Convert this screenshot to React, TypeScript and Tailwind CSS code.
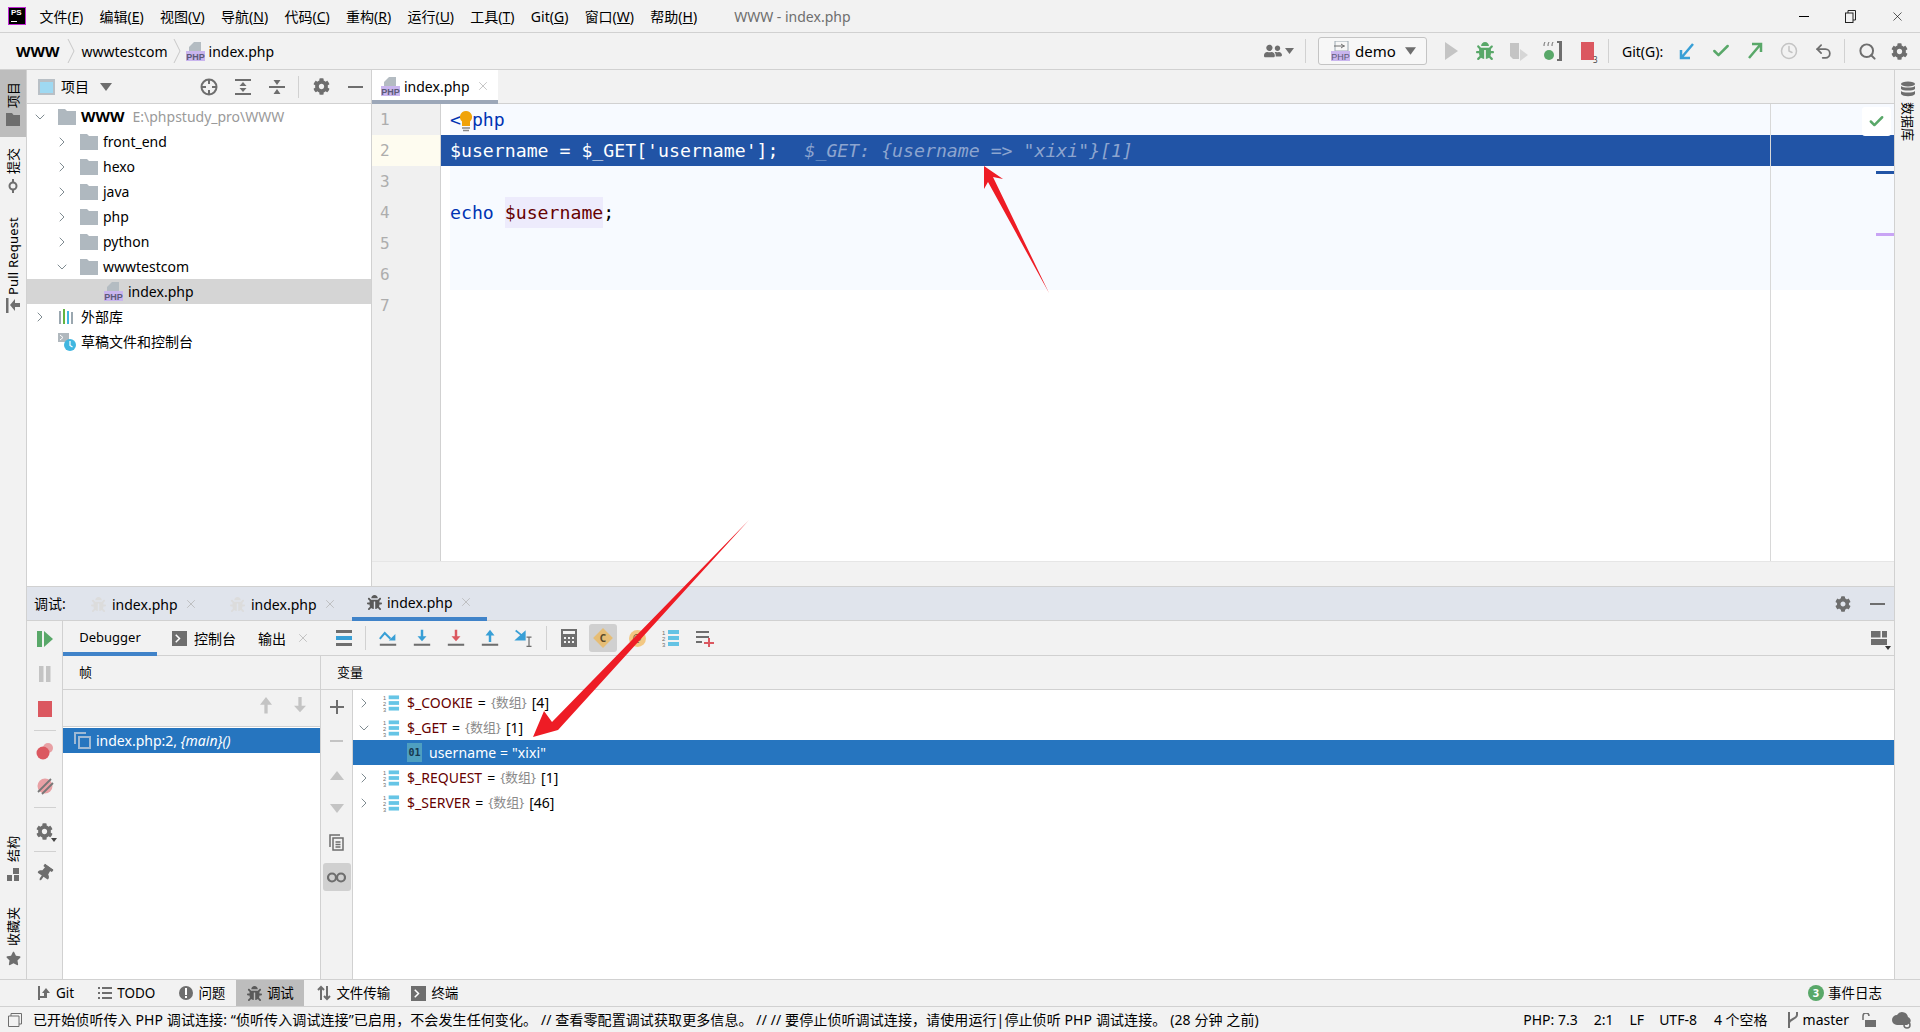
import type { ReactNode } from "react";
import { Check, ChevronDown, ChevronRight, Clock, Search, Undo2, X } from "lucide-react";
import { FaBug, FaCog, FaStar, FaThumbtack, FaUserFriends } from "react-icons/fa";

const menus = [
  ["文件(", "F"],
  ["编辑(", "E"],
  ["视图(", "V"],
  ["导航(", "N"],
  ["代码(", "C"],
  ["重构(", "R"],
  ["运行(", "U"],
  ["工具(", "T"],
  ["Git(", "G"],
  ["窗口(", "W"],
  ["帮助(", "H"],
];

const Slot = ({ children, className = "w-[34px]" }: { children?: ReactNode; className?: string }) => (
  <div className={`flex h-full shrink-0 items-center justify-center ${className}`}>{children}</div>
);

const Sep = ({ className = "mx-[5px] h-[24px]" }: { className?: string }) => (
  <div className={`w-px shrink-0 bg-[#d1d1d1] ${className}`} />
);

const Tri = ({ className = "" }: { className?: string }) => (
  <svg width="12" height="8" viewBox="0 0 12 8" className={className}>
    <path d="M0 0h12L6 8z" fill="#6e6e6e" />
  </svg>
);

const Folder = () => (
  <svg width="18" height="16" viewBox="0 0 18 16" className="shrink-0">
    <path d="M0 0h7l2 2h9v14H0z" fill="#afb8bf" />
  </svg>
);

const PhpIcon = () => (
  <svg width="19" height="19" viewBox="0 0 19 19" className="shrink-0">
    <path d="M8 0h7v9H3V5z" fill="#b4bcc2" />
    <rect x="0" y="9" width="19" height="10" fill="#c9b5ee" />
    <text x="9.5" y="17.5" textAnchor="middle" fontSize="9" fontWeight="700" fill="#5b5a78" fontFamily="Liberation Sans, sans-serif">
      PHP
    </text>
  </svg>
);

const Arrow = ({ dir, color = "#389fd6", base = true }: { dir: "down" | "up"; color?: string; base?: boolean }) => (
  <svg width={base ? 18 : 24} height={base ? 18 : 24} viewBox="0 0 22 22">
    {dir === "down" ? <path d="M9.5 1h3v8h4l-5.500 6-5.500-6h4z" fill={color} /> : <path d="M11 1l5.500 7h-4v8h-3V8h-4z" fill={color} />}
    {base && <rect x="1" y="18" width="20" height="2.500" fill="#6e6e6e" />}
  </svg>
);

const StepOver = () => (
  <svg width="18" height="18" viewBox="0 0 22 22">
    <path d="M1 12l6-7 7 7" fill="none" stroke="#389fd6" strokeWidth="2.500" />
    <path d="M20 6v8h-8z" fill="#389fd6" />
    <rect x="1" y="18" width="20" height="2.500" fill="#6e6e6e" />
  </svg>
);

const RunToCursor = () => (
  <svg width="20" height="20" viewBox="0 0 24 24">
    <path d="M2 3l10 8M13 14V5L3 14z" fill="#389fd6" stroke="#389fd6" strokeWidth="2" />
    <path d="M15 11h6M18 11v11M15 22h6" stroke="#6e6e6e" strokeWidth="1.500" fill="none" />
  </svg>
);

const NumList = ({ small = false }: { small?: boolean }) => (
  <svg width={small ? 17 : 18} height="18" viewBox="0 0 18 18" className="shrink-0">
    <text x="0" y="6" fontSize="6" fill="#6e6e6e" fontFamily="Liberation Sans, sans-serif">1</text>
    <text x="0" y="12" fontSize="6" fill="#6e6e6e" fontFamily="Liberation Sans, sans-serif">2</text>
    <text x="0" y="18" fontSize="6" fill="#6e6e6e" fontFamily="Liberation Sans, sans-serif">3</text>
    <rect x="6" y="1" width="11" height="4" fill="#40b6e0" opacity="0.8" />
    <rect x="6" y="7" width="11" height="4" fill="#40b6e0" opacity="0.8" />
    <rect x="6" y="13" width="11" height="4" fill="#40b6e0" opacity="0.8" />
  </svg>
);

const BugMuted = ({ dark = false }: { dark?: boolean }) => (
  <FaBug size={15} className={dark ? "text-[#5a5a5a]" : "text-[#dcdcdc]"} />
);

const Terminal = () => (
  <svg width="15" height="15" viewBox="0 0 16 16" className="shrink-0">
    <rect width="16" height="16" fill="#6e6e6e" />
    <path d="M4 4l4 4-4 4" fill="none" stroke="#fff" strokeWidth="1.600" />
  </svg>
);

const Close = ({ className = "" }: { className?: string }) => (
  <X size={14} strokeWidth={1.300} className={`text-[#b4b4b4] ${className}`} />
);

const TreeRow = ({
  className,
  open,
  icon,
  children,
}: {
  className: string;
  open?: boolean;
  icon: ReactNode;
  children: ReactNode;
}) => (
  <div className={`flex h-[25px] items-center ${className}`}>
    {open === undefined ? null : (
      <span className="mr-[10px] w-[16px] shrink-0 text-[#7f8b91]">
        {open ? <ChevronDown size={16} strokeWidth={1.500} /> : <ChevronRight size={16} strokeWidth={1.500} />}
      </span>
    )}
    {icon}
    <span className="ml-[5px] flex items-baseline whitespace-nowrap">{children}</span>
  </div>
);

const folders = ["front_end", "hexo", "java", "php", "python"];

function ProjectPanel() {
  return (
    <div className="flex w-[345px] shrink-0 flex-col border-r border-[#d1d1d1]">
      <div className="flex h-[34px] shrink-0 items-center border-b border-[#d1d1d1] pl-[11px]">
        <svg width="17" height="16" viewBox="0 0 17 16" className="shrink-0">
          <rect width="17" height="16" fill="#b9c0c6" />
          <rect x="2" y="3" width="13" height="11" fill="#9fd9f2" />
        </svg>
        <span className="ml-[6px] w-[28px] whitespace-nowrap">项目</span>
        <Tri className="ml-[11px]" />
        <div className="ml-[80px] flex h-full items-center">
          <Slot>
            <svg width="18" height="18" viewBox="0 0 18 18" fill="none" stroke="#6e6e6e" strokeWidth="2">
              <circle cx="9" cy="9" r="7.500" />
              <path d="M9 1v5M9 12v5M1 9h5M12 9h5" />
            </svg>
          </Slot>
          <Slot>
            <svg width="16" height="16" viewBox="0 0 16 16" fill="#6e6e6e">
              <path d="M0 0h16v2H0zM0 14h16v2H0zM8 3l3.500 4h-7zM8 13l-3.500-4h7z" />
            </svg>
          </Slot>
          <Slot>
            <svg width="16" height="16" viewBox="0 0 16 16" fill="#6e6e6e">
              <path d="M0 7h16v2H0zM8 6L4.500 1h7zM8 10l3.500 5h-7z" />
            </svg>
          </Slot>
          <Sep className="mx-[4px] h-[22px]" />
          <Slot className="w-[37px]">
            <FaCog size={17} className="text-[#6e6e6e]" />
          </Slot>
          <Slot className="w-[31px]">
            <div className="h-[2px] w-[15px] bg-[#6e6e6e]" />
          </Slot>
        </div>
      </div>
      <div className="flex-1 bg-white">
        <TreeRow className="pl-[5px]" open icon={<Folder />}>
          <b className="text-[15px] font-bold">WWW</b>
          <span className="ml-[8px] text-[#9a9a9a]">E:\phpstudy_pro\WWW</span>
        </TreeRow>
        {folders.map((name) => (
          <TreeRow key={name} className="pl-[27px]" open={false} icon={<Folder />}>
            {name}
          </TreeRow>
        ))}
        <TreeRow className="pl-[27px]" open icon={<Folder />}>
          wwwtestcom
        </TreeRow>
        <TreeRow className="bg-[#d5d5d5] pl-[77px]" icon={<PhpIcon />}>
          index.php
        </TreeRow>
        <TreeRow
          className="pl-[5px]"
          open={false}
          icon={
            <svg width="18" height="18" viewBox="0 0 18 18" className="shrink-0">
              <path d="M1 3h2v13H1zM13 4h2v12h-2z" fill="#9aa7b0" />
              <path d="M5 1h2v15H5z" fill="#62b543" />
              <path d="M9 3h2v13H9z" fill="#40b6e0" />
            </svg>
          }
        >
          外部库
        </TreeRow>
        <TreeRow
          className="pl-[31px]"
          icon={
            <svg width="18" height="18" viewBox="0 0 18 18" className="shrink-0">
              <path d="M0 0h11v9H0z" fill="#b0b8be" />
              <path d="M2 2l3 2.500L2 7" stroke="#fff" fill="none" />
              <circle cx="12" cy="12" r="6" fill="#40b6e0" />
              <path d="M12 8v4.500l2.500 1.500" stroke="#fff" strokeWidth="1.200" fill="none" />
            </svg>
          }
        >
          草稿文件和控制台
        </TreeRow>
      </div>
    </div>
  );
}

const Num = ({ n, current }: { n: number; current?: boolean }) => (
  <div
    className={`flex h-[31px] w-[69px] shrink-0 items-center border-r border-[#d1d1d1] pl-[8px] font-['DejaVu_Sans_Mono',monospace] text-[16px] text-[#adadad] ${
      current ? "bg-[#fefcf0]" : "bg-[#f0f0f0]"
    }`}
  >
    {n}
  </div>
);

const CodeLine = ({ n, children }: { n: number; children?: ReactNode }) => (
  <div className="flex h-[31px]">
    <Num n={n} />
    <div className="w-[9px] shrink-0 bg-white" />
    <div className="flex flex-1 items-center bg-[#f7faff] whitespace-pre">{children}</div>
  </div>
);

function Editor() {
  return (
    <div className="flex min-w-0 flex-1 flex-col">
      <div className="flex h-[34px] shrink-0 border-b border-[#d1d1d1]">
        <div className="flex h-[34px] w-[126px] items-center border-b-[4px] border-[#9ca7b8] bg-white pl-[9px] pt-[2px]">
          <PhpIcon />
          <span className="ml-[4px] mr-[6px]">index.php</span>
          <Close />
        </div>
      </div>
      <div className="relative flex flex-1 flex-col bg-white font-['DejaVu_Sans_Mono',monospace] text-[18.2px]">
        <CodeLine n={1}>
          <span className="text-[#0033b3]">&lt;?php</span>
        </CodeLine>
        <div className="flex h-[31px]">
          <Num n={2} current />
          <div className="flex flex-1 items-center bg-[#2154a6] pl-[9px] whitespace-pre text-white">
            <span>$username = $_GET['username'];</span>
            <span className="ml-[26px] text-[#8da5cf] italic">{'$_GET: {username => "xixi"}[1]'}</span>
          </div>
        </div>
        <CodeLine n={3} />
        <CodeLine n={4}>
          <span className="text-[#0033b3]">echo</span>
          <span> </span>
          <span className="flex h-full items-center bg-[#edebfc] text-[#660000]">$username</span>
          <span>;</span>
        </CodeLine>
        <CodeLine n={5} />
        <CodeLine n={6} />
        <div className="flex h-[31px]">
          <Num n={7} />
        </div>
        <div className="w-[69px] flex-1 border-r border-[#d1d1d1] bg-[#f0f0f0]" />
        <div className="h-[25px] shrink-0 bg-[#f2f2f2] border-t border-[#e6e6e6]" />

        {/* margin line, bulb and stripes lie over the code */}
        <div className="absolute top-0 bottom-[25px] left-[1398px] w-px bg-[#d8d8d8]" />
        <svg width="18" height="24" viewBox="0 0 18 24" className="absolute top-[5px] left-[85px]">
          <path d="M9 2a6 6 0 0 1 4 10.500V17H5v-4.500A6 6 0 0 1 9 2z" fill="#f0a30a" />
          <path d="M5 19h8M6 21.500h6" stroke="#888" strokeWidth="1.500" />
        </svg>
        <div className="absolute top-[3px] left-[1490px] flex h-[29px] w-[29px] items-center justify-center rounded-[3px] bg-white">
          <Check size={17} strokeWidth={3.500} className="text-[#59a869]" />
        </div>
        <div className="absolute top-[67px] right-0 h-[3px] w-[18px] bg-[#2154a6]" />
        <div className="absolute top-[129px] right-0 h-[3px] w-[18px] bg-[#c9a4f5]" />
      </div>
    </div>
  );
}

const DebugTab = ({ dim, active, w }: { dim?: boolean; active?: boolean; w: string }) => (
  <div
    className={`flex h-[34px] items-center ${w} ${active ? "border-b-[4px] border-[#4083c9] pl-[15px]" : "pl-[25px]"} pt-[1px]`}
  >
    <BugMuted dark={!dim} />
    <span className={`${active ? "ml-[5px]" : "ml-[6px]"} mr-[6px]`}>index.php</span>
    <Close />
  </div>
);

const LeftToolIcons = () => (
  <div className="flex w-[36px] shrink-0 flex-col items-center border-r border-[#d1d1d1]">
    <div className="flex h-[36px] items-center">
      <svg width="16" height="18" viewBox="0 0 16 18">
        <rect x="0" y="1" width="5" height="16" fill="#59a869" />
        <path d="M7 1l9 8-9 8z" fill="#59a869" />
      </svg>
    </div>
    <div className="flex h-[34px] items-center">
      <svg width="12" height="18" viewBox="0 0 12 18" fill="#c4c4c4">
        <path d="M0 1h4.500v16H0zM7 1h4.500v16H7z" />
      </svg>
    </div>
    <div className="flex h-[35px] items-center">
      <div className="h-[16px] w-[14px] bg-[#db5860]" />
    </div>
    <div className="mt-[4px] mb-[2px] h-px w-[22px] bg-[#d1d1d1]" />
    <div className="flex h-[35px] items-center">
      <svg width="18" height="18" viewBox="0 0 18 18">
        <circle cx="12" cy="6" r="5" fill="#e8a0a4" />
        <circle cx="7" cy="11" r="6.500" fill="#db5860" />
      </svg>
    </div>
    <div className="flex h-[35px] items-center">
      <svg width="18" height="18" viewBox="0 0 18 18">
        <circle cx="9" cy="9" r="7.500" fill="#e8a0a4" />
        <path d="M2 15L15 2M6 17L17 6" stroke="#777" strokeWidth="1.800" />
      </svg>
    </div>
    <div className="mt-[4px] mb-[5px] h-px w-[22px] bg-[#d1d1d1]" />
    <div className="relative flex h-[36px] items-center">
      <FaCog size={17} className="text-[#6e6e6e]" />
      <div className="absolute right-[-4px] bottom-[7px] h-0 w-0 border-x-[3px] border-t-[4px] border-x-transparent border-t-[#444]" />
    </div>
    <div className="mt-[2px] mb-[3px] h-px w-[22px] bg-[#d1d1d1]" />
    <div className="flex h-[36px] items-center">
      <FaThumbtack size={17} className="rotate-[35deg] text-[#6e6e6e]" />
    </div>
  </div>
);

const vars = [
  { name: "$_COOKIE", count: "[4]", open: false },
  { name: "$_GET", count: "[1]", open: true },
  { name: "$_REQUEST", count: "[1]", open: false },
  { name: "$_SERVER", count: "[46]", open: false },
];

const VarRow = ({ name, count, open }: { name: string; count: string; open: boolean }) => (
  <div className="flex h-[25px] items-center pl-[3px]">
    <span className="w-[17px] shrink-0 text-[#7f8b91]">
      {open ? <ChevronDown size={16} strokeWidth={1.500} /> : <ChevronRight size={16} strokeWidth={1.500} />}
    </span>
    <span className="ml-[10px]">
      <NumList small />
    </span>
    <span className="ml-[7px] text-[#660000]">{name}</span>
    <span className="ml-[5px]">=</span>
    <span className="ml-[5px] text-[13px] text-[#8a8a8a]">{"{数组}"}</span>
    <span className="ml-[5px]">{count}</span>
  </div>
);

function DebugPanel() {
  const rows = vars.map((v) => <VarRow key={v.name} {...v} />);
  return (
    <div className="flex h-[392px] shrink-0 flex-col">
      <div className="flex h-[34px] shrink-0 items-center border-b border-[#d1d1d1] bg-[#e0e4ec] pl-[7px]">
        <span className="w-[32px]">调试:</span>
        <DebugTab dim w="w-[139px]" />
        <DebugTab dim w="w-[139px]" />
        <div className="ml-[8px]">
          <DebugTab active w="w-[135px]" />
        </div>
        <div className="ml-auto flex h-full items-center pr-[0px]">
          <Slot>
            <FaCog size={16} className="text-[#6e6e6e]" />
          </Slot>
          <Slot>
            <div className="h-[2px] w-[15px] bg-[#6e6e6e]" />
          </Slot>
        </div>
      </div>

      <div className="flex min-h-0 flex-1">
        <LeftToolIcons />
        <div className="flex min-w-0 flex-1 flex-col">
          <div className="flex h-[35px] shrink-0 items-center border-b border-[#d1d1d1]">
            <div className="flex h-[35px] w-[94px] items-center justify-center border-b-[4px] border-[#4083c9] pt-[3px] text-[13px]">
              Debugger
            </div>
            <div className="ml-[15px] flex items-center">
              <Terminal />
              <span className="ml-[7px]">控制台</span>
            </div>
            <span className="ml-[22px]">输出</span>
            <Close className="ml-[10px]" />
            <Slot className="ml-[17px] w-[34px]">
              <svg width="16" height="16" viewBox="0 0 16 16">
                <rect y="0" width="16" height="3" fill="#6e6e6e" />
                <rect y="6" width="16" height="4" fill="#389fd6" />
                <rect y="13" width="16" height="3" fill="#6e6e6e" />
              </svg>
            </Slot>
            <Sep className="ml-[4px] mr-[5px] h-[24px]" />
            <Slot>
              <StepOver />
            </Slot>
            <Slot>
              <Arrow dir="down" />
            </Slot>
            <Slot>
              <Arrow dir="down" color="#db5860" />
            </Slot>
            <Slot>
              <Arrow dir="up" />
            </Slot>
            <Slot>
              <RunToCursor />
            </Slot>
            <Sep className="mx-[5px] h-[24px]" />
            <Slot>
              <svg width="16" height="18" viewBox="0 0 16 18">
                <path fillRule="evenodd" d="M0 0h16v18H0zM2 2v3h12V2zM3 8v2h2V8zM7 8v2h2V8zM11 8v2h2V8zM3 12v2h2v-2zM7 12v2h2v-2zM11 12v2h2v-2z" fill="#6e6e6e" />
              </svg>
            </Slot>
            <Slot>
              <div className="flex h-[28px] w-[28px] items-center justify-center rounded-[3px] bg-[#d0d0d0]">
                <div className="relative flex h-[14px] w-[14px] items-center justify-center">
                  <div className="absolute inset-0 rotate-45 bg-[#e6bd75]" />
                  <span className="relative text-[10px] font-bold text-[#5a4a2a]">C</span>
                </div>
              </div>
            </Slot>
            <Slot>
              <div className="flex h-[17px] w-[17px] items-center justify-center rounded-full bg-[#f3c883] text-[10px] text-[#6b5a3a]">@</div>
            </Slot>
            <Slot>
              <NumList />
            </Slot>
            <Slot>
              <svg width="18" height="18" viewBox="0 0 18 18">
                <path d="M0 2h13v2H0zM0 7h13v2H0zM0 12h6v2H0z" fill="#6e6e6e" />
                <path d="M8 13h10v2H8zM12 9h2v9h-2z" fill="#db5860" />
              </svg>
            </Slot>
            <Slot className="ml-auto w-[30px]">
              <div className="relative">
                <svg width="16" height="14" viewBox="0 0 16 14" fill="#6e6e6e">
                  <path d="M0 0h9.500v6.500H0zM11 0h5v6.500h-5zM0 8h16v6H0z" />
                </svg>
                <div className="absolute right-[-4px] bottom-[-5px] h-0 w-0 border-x-[3px] border-t-[4px] border-x-transparent border-t-[#333]" />
              </div>
            </Slot>
          </div>

          <div className="flex min-h-0 flex-1">
            <div className="flex w-[258px] shrink-0 flex-col border-r border-[#d1d1d1]">
              <div className="flex h-[34px] shrink-0 items-center border-b border-[#d1d1d1] pl-[16px] text-[13px]">帧</div>
              <div className="flex h-[37px] shrink-0 items-center justify-end border-b border-[#d1d1d1] pr-[3px]">
                <Slot>
                  <Arrow dir="up" color="#c4c4c4" base={false} />
                </Slot>
                <Slot>
                  <Arrow dir="down" color="#c4c4c4" base={false} />
                </Slot>
              </div>
              <div className="flex-1 bg-white pt-[1px]">
                <div className="flex h-[25px] items-center bg-[#2675bf] pl-[11px] text-white">
                  <svg width="17" height="17" viewBox="0 0 17 17" fill="none" className="shrink-0" stroke="#9fb9d4" strokeWidth="2">
                    <path d="M1 12V1h11" />
                    <rect x="5" y="5" width="11" height="11" />
                  </svg>
                  <span className="ml-[5px]">
                    index.php:2, <i>{"{main}()"}</i>
                  </span>
                </div>
              </div>
            </div>

            <div className="flex w-[32px] shrink-0 flex-col items-center border-r border-[#d1d1d1]">
              <div className="h-[34px] w-full shrink-0 border-b border-[#d1d1d1]" />
              <div className="flex h-[34px] items-center text-[22px] font-light text-[#6e6e6e]">
                <svg width="14" height="14" viewBox="0 0 14 14" fill="#6e6e6e">
                  <path d="M6 0h2v6h6v2H8v6H6V8H0V6h6z" />
                </svg>
              </div>
              <div className="flex h-[34px] items-center">
                <div className="h-[2px] w-[13px] bg-[#c4c4c4]" />
              </div>
              <div className="flex h-[34px] items-center">
                <svg width="14" height="9" viewBox="0 0 14 9"><path d="M7 0l7 9H0z" fill="#c4c4c4" /></svg>
              </div>
              <div className="flex h-[33px] items-center">
                <svg width="14" height="9" viewBox="0 0 14 9"><path d="M0 0h14L7 9z" fill="#c4c4c4" /></svg>
              </div>
              <div className="flex h-[34px] items-center">
                <svg width="15" height="17" viewBox="0 0 15 17" fill="none" stroke="#6e6e6e" strokeWidth="1.500">
                  <path d="M1 13V1h10" />
                  <path d="M4 4h10v12H4zM6.500 8h5M6.500 10.500h5M6.500 13h5" />
                </svg>
              </div>
              <div className="mt-[4px] flex h-[28px] w-[28px] items-center justify-center rounded-[3px] bg-[#d0d0d0]">
                <svg width="19" height="11" viewBox="0 0 19 11" fill="none" stroke="#6e6e6e" strokeWidth="2.200">
                  <circle cx="5" cy="5.500" r="4" />
                  <circle cx="14" cy="5.500" r="4" />
                </svg>
              </div>
            </div>

            <div className="min-w-0 flex-1 bg-white">
              <div className="h-[34px] border-b border-[#d1d1d1] bg-[#f2f2f2] -ml-[32px] flex items-center pl-[16px] text-[13px] w-[calc(100%+32px)]">
                变量
              </div>
              {rows.slice(0, 2)}
              <div className="flex h-[25px] items-center bg-[#2675bf] pl-[54px] text-white">
                <div className="flex h-[19px] w-[15px] items-center justify-center bg-[#4e9fc0] font-['DejaVu_Sans_Mono',monospace] text-[10px] font-bold text-[#16384f]">
                  01
                </div>
                <span className="ml-[7px] tracking-[0.1px]">username = "xixi"</span>
              </div>
              {rows.slice(2)}
            </div>
          </div>
        </div>
      </div>
    </div>
  );
}

const ToolTab = ({ icon, label, className = "" }: { icon: ReactNode; label: string; className?: string }) => (
  <div className={`flex h-full items-center gap-[5px] ${className}`}>
    {icon}
    <span>{label}</span>
  </div>
);

const sidewaysText = "rotate-180 leading-[20px] [text-orientation:sideways] [writing-mode:vertical-rl]";

export default function App() {
  return (
    <div className="relative flex h-[1032px] w-[1920px] flex-col overflow-hidden bg-[#f2f2f2] font-['Noto_Sans','Noto_Sans_CJK_SC',sans-serif] text-[14px] text-black">
      {/* title bar */}
      <div className="flex h-[33px] shrink-0 items-center border-b border-[#d1d1d1] pl-[9px]">
        <div className="relative h-[16px] w-[16px] bg-black ring-1 ring-[#c026d3]">
          <span className="absolute top-[-1px] left-[2px] font-['Liberation_Sans',sans-serif] text-[8px] font-bold text-white">PS</span>
          <span className="absolute bottom-[2px] left-[2px] h-px w-[6px] bg-white" />
        </div>
        <div className="ml-[14.5px] flex gap-[16.3px]">
          {menus.map(([head, key]) => (
            <span key={key} className="whitespace-nowrap">
              {head}
              <u>{key}</u>)
            </span>
          ))}
        </div>
        <span className="ml-[37px] text-[#6e6e6e]">WWW - index.php</span>
        <div className="ml-auto flex h-full">
          <Slot className="w-[47px]">
            <div className="h-px w-[10px] bg-black" />
          </Slot>
          <Slot className="w-[47px]">
            <svg width="11" height="13" viewBox="0 0 11 13" fill="none" stroke="#222">
              <path d="M3 3V.5h7.500V10H8" />
              <rect x=".5" y="3" width="7.500" height="9.500" />
            </svg>
          </Slot>
          <Slot className="w-[46px]">
            <X size={15} strokeWidth={1} className="text-black" />
          </Slot>
        </div>
      </div>

      {/* navigation bar */}
      <div className="flex h-[37px] shrink-0 items-center border-b border-[#d1d1d1] pl-[16px]">
        <b className="text-[15px] font-bold">WWW</b>
        <svg width="8" height="26" viewBox="0 0 8 26" className="mx-[7px]" fill="none" stroke="#c8c8c8">
          <path d="M1 1l6 12-6 12" />
        </svg>
        <span>wwwtestcom</span>
        <svg width="8" height="26" viewBox="0 0 8 26" className="mx-[5px]" fill="none" stroke="#c8c8c8">
          <path d="M1 1l6 12-6 12" />
        </svg>
        <PhpIcon />
        <span className="ml-[4px]">index.php</span>

        <div className="ml-auto flex h-full items-center pr-[2px]">
          <div className="flex items-center gap-[3px]">
            <FaUserFriends size={18} className="text-[#6e6e6e]" />
            <Tri className="w-[9px]" />
          </div>
          <Sep className="ml-[11px] mr-[12px] h-[24px]" />
          <div className="flex h-[28px] w-[109px] items-center rounded-[3px] border border-[#c4c4c4] bg-[#f7f7f7] pl-[12px]">
            <svg width="19" height="20" viewBox="0 0 19 20" className="shrink-0">
              <path d="M4 0h13v10H4z" fill="none" stroke="#9aa7b0" />
              <path d="M3 5h11M10 3l3 2-3 2" stroke="#6e6e6e" fill="none" />
              <rect y="10" width="19" height="10" fill="#c9b5ee" />
              <text x="9.500" y="18.500" textAnchor="middle" fontSize="9" fill="#5b5a78" fontFamily="Liberation Sans, sans-serif">PHP</text>
            </svg>
            <span className="ml-[5px] text-[15px]">demo</span>
            <Tri className="ml-[9px] w-[11px]" />
          </div>
          <Slot className="ml-[7px] w-[34px]">
            <svg width="13" height="18" viewBox="0 0 13 18"><path d="M0 0l13 9-13 9z" fill="#c4c4c4" /></svg>
          </Slot>
          <Slot>
            <FaBug size={18} className="text-[#59a869]" />
          </Slot>
          <Slot>
            <svg width="20" height="20" viewBox="0 0 20 20">
              <path d="M1 2h9v16H4l-3-3z" fill="#c4c4c4" />
              <path d="M11 8l8 6-8 6z" fill="#d6d6d6" />
            </svg>
          </Slot>
          <Slot>
            <svg width="20" height="22" viewBox="0 0 20 22">
              <path d="M1 6a6 6 0 0 1 1-4M5 6a6 6 0 0 1 1-4M9 6a6 6 0 0 1 1-4" stroke="#6e6e6e" fill="none" />
              <path d="M14 1h5v20h-5v-2h2V3h-2z" fill="#6e6e6e" />
              <circle cx="6" cy="15" r="5" fill="#59a869" />
            </svg>
          </Slot>
          <Slot>
            <div className="relative h-[18px] w-[13px] bg-[#db5860]">
              <span className="absolute right-[-4px] bottom-[-4px] text-[8px] leading-none text-[#444]">3</span>
            </div>
          </Slot>
          <Sep className="ml-[4px] mr-[13px] h-[24px]" />
          <span className="w-[48px]">Git(G):</span>
          <Slot>
            <svg width="16" height="18" viewBox="0 0 16 18" fill="none" stroke="#389fd6" strokeWidth="2.500">
              <path d="M14 2L3 15M2 8v8h9" />
            </svg>
          </Slot>
          <Slot>
            <Check size={20} strokeWidth={3} className="text-[#59a869]" />
          </Slot>
          <Slot>
            <svg width="16" height="18" viewBox="0 0 16 18" fill="none" stroke="#59a869" strokeWidth="2.500">
              <path d="M2 16L13 3M5 2h9v8" />
            </svg>
          </Slot>
          <Slot>
            <Clock size={18} strokeWidth={2} className="text-[#c4c4c4]" />
          </Slot>
          <Slot>
            <Undo2 size={19} strokeWidth={2.200} className="text-[#6e6e6e]" />
          </Slot>
          <Sep className="ml-[4px] mr-[5px] h-[24px]" />
          <Slot>
            <Search size={19} strokeWidth={2.500} className="text-[#6e6e6e]" />
          </Slot>
          <Slot className="w-[34px] pr-[3px]">
            <FaCog size={17} className="text-[#6e6e6e]" />
          </Slot>
        </div>
      </div>

      {/* main area */}
      <div className="flex min-h-0 flex-1 border-b border-[#d1d1d1]">
        <div className="flex w-[27px] shrink-0 flex-col items-center border-r border-[#d1d1d1] text-[13px]">
          <div className="flex h-[67px] w-full flex-col items-center bg-[#bdbdbd] pt-[12px]">
            <span className={sidewaysText}>项目</span>
            <svg width="14" height="13" viewBox="0 0 14 13" className="mt-[5px]" fill="#6e6e6e">
              <path d="M0 0h6l1.500 2H14v11H0z" />
            </svg>
          </div>
          <span className={`mt-[11px] ${sidewaysText}`}>提交</span>
          <svg width="14" height="14" viewBox="0 0 14 14" className="mt-[5px]" fill="none" stroke="#6e6e6e" strokeWidth="2">
            <circle cx="7" cy="7" r="3.500" />
            <path d="M7 0v3M7 11v3" />
          </svg>
          <span className={`mt-[24px] tracking-[0.2px] ${sidewaysText}`}>Pull Request</span>
          <svg width="14" height="15" viewBox="0 0 14 15" className="mt-[3px]" fill="#6e6e6e">
            <path d="M0 0h2.500v15H0zM4 7l5-6v4h5v4H9v4z" />
          </svg>
          <span className={`mt-auto ${sidewaysText}`}>结构</span>
          <svg width="13" height="13" viewBox="0 0 13 13" className="mt-[6px]" fill="#6e6e6e">
            <path d="M6 0h6v6H6zM0 7h5v6H0zM7 7h5v6H7z" />
          </svg>
          <span className={`mt-[26px] ${sidewaysText}`}>收藏夹</span>
          <FaStar size={15} className="mt-[5px] mb-[13px] text-[#6e6e6e]" />
        </div>

        <div className="flex min-w-0 flex-1 flex-col">
          <div className="flex h-[517px] shrink-0 border-b border-[#d1d1d1]">
            <ProjectPanel />
            <Editor />
          </div>
          <DebugPanel />
        </div>

        <div className="flex w-[26px] shrink-0 flex-col items-center border-l border-[#d1d1d1] pt-[11px] text-[13px]">
          <svg width="14" height="16" viewBox="0 0 14 16" fill="#6e6e6e">
            <ellipse cx="7" cy="3" rx="7" ry="2.500" />
            <path d="M0 5c2 2 12 2 14 0v3c-2 2-12 2-14 0zM0 10c2 2 12 2 14 0v3c-2 3-12 3-14 0z" />
          </svg>
          <span className="mt-[5px] leading-[20px] [text-orientation:sideways] [writing-mode:vertical-rl]">数据库</span>
        </div>
      </div>

      {/* tool window bar */}
      <div className="flex h-[27px] shrink-0 items-center border-b border-[#d1d1d1] pl-[37px] text-[13.500px]">
        <ToolTab
          label="Git"
          icon={
            <svg width="14" height="16" viewBox="0 0 14 16" fill="#6e6e6e">
              <path d="M1 1h2v14H1zM3 11h4V8H5l4-5 4 5h-3v5H3z" />
            </svg>
          }
        />
        <ToolTab
          className="ml-[24px]"
          label="TODO"
          icon={
            <svg width="14" height="14" viewBox="0 0 14 14" fill="#6e6e6e">
              <path d="M0 1h2v2H0zM4 1h10v2H4zM0 6h2v2H0zM4 6h10v2H4zM0 11h2v2H0zM4 11h10v2H4z" />
            </svg>
          }
        />
        <ToolTab
          className="ml-[24px]"
          label="问题"
          icon={
            <svg width="14" height="16" viewBox="0 0 14 16">
              <circle cx="7" cy="8" r="7" fill="#6e6e6e" />
              <path d="M6 3h2v7H6zM6 11h2v2H6z" fill="#fff" />
            </svg>
          }
        />
        <ToolTab className="ml-[11px] w-[68px] justify-center bg-[#bdbdbd]" label="调试" icon={<BugMuted dark />} />
        <ToolTab
          className="ml-[13px]"
          label="文件传输"
          icon={
            <svg width="14" height="16" viewBox="0 0 14 16" fill="none" stroke="#6e6e6e" strokeWidth="2">
              <path d="M4 15V2M1 5l3-3 3 3M10 1v13M7 11l3 3 3-3" />
            </svg>
          }
        />
        <ToolTab className="ml-[21px]" label="终端" icon={<Terminal />} />
        <div className="ml-auto flex items-center gap-[4px] pr-[38px]">
          <div className="flex h-[16px] w-[16px] items-center justify-center rounded-full bg-[#59a869] text-[11px] font-bold text-white">3</div>
          <span>事件日志</span>
        </div>
      </div>

      {/* status bar */}
      <div className="flex h-[25px] shrink-0 items-center pl-[8px] text-[14px]">
        <svg width="14" height="14" viewBox="0 0 14 14" fill="none" stroke="#6e6e6e" className="shrink-0">
          <path d="M3 3V.5h10.500V11H11M.5 3h10.500v10.500H.5z" />
        </svg>
        <span className="ml-[11px] whitespace-nowrap tracking-[0.1px]">
          已开始侦听传入 PHP 调试连接: “侦听传入调试连接”已启用，不会发生任何变化。 // 查看零配置调试获取更多信息。 // // 要停止侦听调试连接，请使用运行|停止侦听 PHP 调试连接。 (28 分钟 之前)
        </span>
        <div className="ml-auto flex items-center pr-[8px]">
          <span>PHP: 7.3</span>
          <span className="ml-[16px]">2:1</span>
          <span className="ml-[16px]">LF</span>
          <span className="ml-[15px]">UTF-8</span>
          <span className="ml-[17px]">4 个空格</span>
          <svg width="12" height="18" viewBox="0 0 12 18" className="ml-[19px]" fill="none" stroke="#6e6e6e" strokeWidth="2">
            <path d="M2 1v16M10 1v3c0 4-8 4-8 8" />
          </svg>
          <span className="ml-[4px]">master</span>
          <svg width="14" height="14" viewBox="0 0 14 14" className="ml-[13px]" fill="#6e6e6e">
            <path d="M3 7h11v7H3z" />
            <path d="M1 7V3a3 3 0 0 1 6 0" fill="none" stroke="#6e6e6e" strokeWidth="1.500" />
          </svg>
          <svg width="20" height="18" viewBox="0 0 20 18" className="ml-[16px]" fill="#6e6e6e">
            <path d="M5 14a5 5 0 0 1 0-10 6 6 0 0 1 11 2 4 4 0 0 1 2 6l-3 2z" />
            <circle cx="15" cy="14" r="3" fill="none" stroke="#6e6e6e" strokeWidth="1.500" />
          </svg>
        </div>
      </div>

      {/* red annotation arrows over the screenshot */}
      <svg width="1920" height="1032" viewBox="0 0 1920 1032" className="pointer-events-none absolute inset-0">
        <path d="M984 166L1003 179 993 177 1049 293 988 182 984 189z" fill="#ee1c25" />
        <path d="M533 737L544 711 552 722 749 520 558 730z" fill="#ee1c25" />
      </svg>
    </div>
  );
}
